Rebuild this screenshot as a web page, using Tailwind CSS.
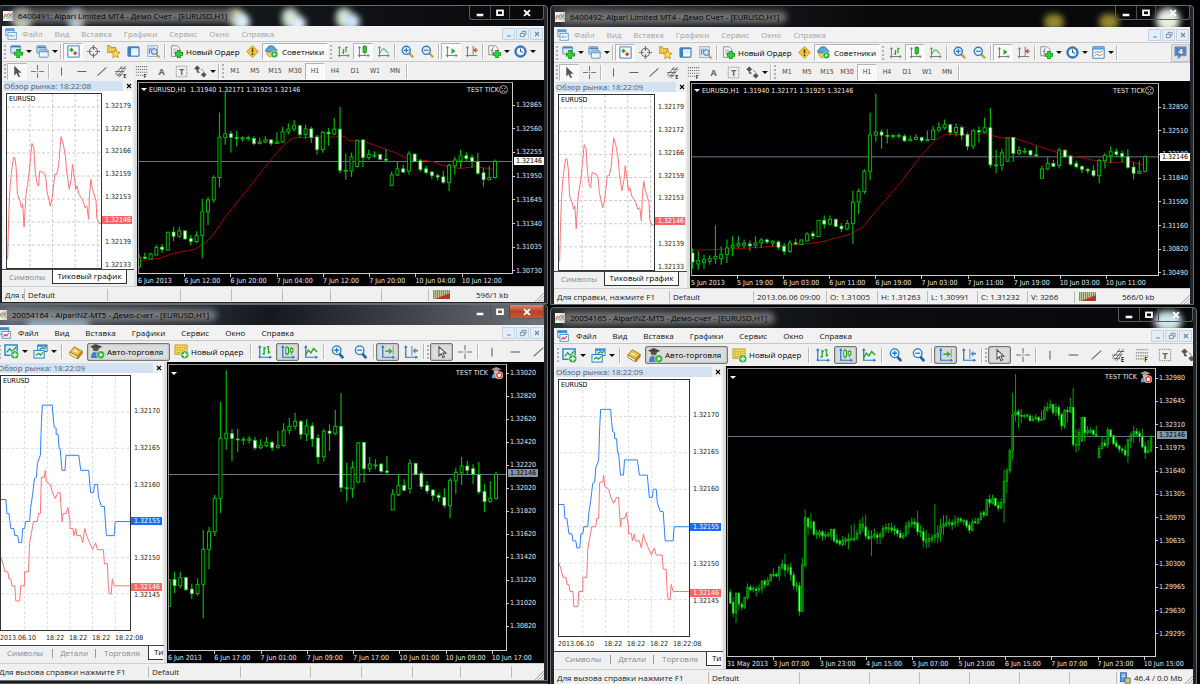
<!DOCTYPE html>
<html lang="ru">
<head>
<meta charset="utf-8">
<title>MetaTrader terminals</title>
<script src="https://cdn.jsdelivr.net/npm/@tailwindcss/browser@4"></script>
</head>
<body class="h-screen overflow-hidden bg-black font-['Open_Sans','Noto_Sans',sans-serif] text-[8px] leading-[10px] text-[#222]">

<svg class="hidden" xmlns="http://www.w3.org/2000/svg">
  <symbol id="logo" viewBox="0 0 16 16"><rect width="16" height="16" fill="#f4f4f0"/><path d="M1 10q2-6 3-5t2 4q2-6 3-5t2 4q2-5 4-3" fill="none" stroke="#e06060" stroke-width="1.6"/><path d="M1 13q2-5 4-4t3 3q2-5 4-4t3 3" fill="none" stroke="#6ab86a" stroke-width="1.4"/></symbol>
  <symbol id="docs" viewBox="0 0 16 16"><rect x="1" y="1" width="11" height="9" fill="#dcecfb" stroke="#4a8fd0"/><rect x="1" y="1" width="11" height="3" fill="#5d9fdd"/><rect x="4" y="6" width="11" height="9" fill="#f4faff" stroke="#4a8fd0"/><path d="M6 12l2-3 2 3 3-3" fill="none" stroke="#5d9fdd" stroke-width="1.3"/></symbol>
  <symbol id="docs5" viewBox="0 0 16 16"><rect x="1" y="1" width="12" height="9" fill="#dcecfb" stroke="#2679c9"/><rect x="1" y="1" width="12" height="3" fill="#3a8ada"/><rect x="4" y="6" width="11" height="9" fill="#fff" stroke="#2679c9"/><path d="M6 13l2-3 2 2 3-4" fill="none" stroke="#e33" stroke-width="1.5"/></symbol>
  <symbol id="newchart" viewBox="0 0 16 16"><rect x="1" y="1" width="12" height="9" rx="1" fill="#d8e8f6" stroke="#4781b8"/><path d="M1 2h12" stroke="#4781b8" stroke-width="2"/><path d="M10 5v11M5 10.500h11" stroke="#0a9a12" stroke-width="4.600"/><path d="M10 6v9M6 10.500h9" stroke="#2fd03a" stroke-width="3"/></symbol>
  <symbol id="profiles" viewBox="0 0 16 16"><rect x="1" y="1" width="11" height="9" rx="1" fill="#cfe2f4" stroke="#4781b8"/><path d="M2 3h10" stroke="#4781b8" stroke-width="2"/><rect x="4" y="6" width="11" height="9" rx="1" fill="#eef6fd" stroke="#4781b8"/><path d="M5 8h10" stroke="#6fa3d6" stroke-width="2"/></symbol>
  <symbol id="market" viewBox="0 0 16 16"><rect x="1" y="1" width="14" height="14" rx="1" fill="#fff" stroke="#5b9bd5" stroke-width="1.600"/><path d="M5.500 3l3 3-3 3-3-3z" fill="#28b030"/><path d="M10 7l3 3-3 3-3-3z" fill="#e05040"/></symbol>
  <symbol id="target" viewBox="0 0 16 16"><circle cx="8" cy="8" r="5" fill="none" stroke="#777" stroke-width="1.500"/><path d="M8 0v6M8 10v6M0 8h6M10 8h6" stroke="#777" stroke-width="1.500"/></symbol>
  <symbol id="star" viewBox="0 0 16 16"><path d="M0 1h4l1 2h6v6H0z" fill="#efc64a" stroke="#b88a1c"/><path d="M10.500 5l1.600 3.600 3.900.4-2.900 2.600.8 4-3.400-2-3.400 2 .8-4L5 9l3.900-.4z" fill="#ffdc50" stroke="#b88a1c"/></symbol>
  <symbol id="terminal" viewBox="0 0 16 16"><rect x="1" y="2" width="14" height="12" rx="1" fill="#3d7fc4" stroke="#4f8ac8"/><rect x="5" y="4" width="9" height="9" fill="#f6fbff"/><path d="M6 6h7M6 8.500h7" stroke="#cfe0f0"/></symbol>
  <symbol id="tester" viewBox="0 0 16 16"><rect x="1" y="1" width="12" height="13" fill="#e6f0f9" stroke="#7ba7d0"/><path d="M3 4v7M5 3v5M8 3v3" stroke="#5a87b5" stroke-width="1.200"/><circle cx="9" cy="8" r="3.500" fill="#cfe5f8" stroke="#5a87b5" stroke-width="1.300"/><path d="M11.500 11l4 4.500" stroke="#c9962c" stroke-width="2"/></symbol>
  <symbol id="order" viewBox="0 0 16 16"><path d="M2 1h7l3 3v10H2z" fill="#fff" stroke="#777"/><path d="M4 5h5M4 7.500h5M4 10h3" stroke="#888"/><path d="M11 6v10M6 11h10" stroke="#0a9a12" stroke-width="4.600"/><path d="M11 7v8M7 11h8" stroke="#2fd03a" stroke-width="3"/></symbol>
  <symbol id="warn" viewBox="0 0 16 16"><path d="M8 .8L15.200 8 8 15.200.8 8z" fill="#f0c838" stroke="#b08a2a"/><path d="M8 4v5" stroke="#5a3c00" stroke-width="2"/><circle cx="8" cy="11.300" r="1.100" fill="#5a3c00"/></symbol>
  <symbol id="expert" viewBox="0 0 16 16"><circle cx="7.500" cy="9" r="5.500" fill="#f1cf57" stroke="#b88a1c"/><path d="M0 7c2 2 12 2 15 0C12 4 12 1 7.500 1S3 4 0 7z" fill="#5ba3dd" stroke="#2e73b3"/><circle cx="11.500" cy="11.500" r="4.300" fill="#26b02e" stroke="#fff" stroke-width=".6"/><path d="M10.300 9.300v4.400l3.400-2.200z" fill="#fff"/></symbol>
  <symbol id="bars" viewBox="0 0 16 16"><path d="M3 2v13M1 13h14M1.500 4L3 2l1.500 2M13 11.500l2 1.500-2 1.500" fill="none" stroke="#777" stroke-width="1.200"/><path d="M8 5v6M8 9H6.500M11 2v7M11 3h2" fill="none" stroke="#1ea82a" stroke-width="1.500"/></symbol>
  <symbol id="candles" viewBox="0 0 16 16"><path d="M3 2v13M1 13h14M1.500 4L3 2l1.500 2M13 11.500l2 1.500-2 1.500" fill="none" stroke="#777" stroke-width="1.200"/><path d="M9.500 0v12" stroke="#128a1c"/><rect x="7.500" y="2" width="4" height="7" fill="#35c53f" stroke="#128a1c"/></symbol>
  <symbol id="line" viewBox="0 0 16 16"><path d="M3 2v13M1 13h14M1.500 4L3 2l1.500 2M13 11.500l2 1.500-2 1.500" fill="none" stroke="#777" stroke-width="1.200"/><path d="M3 11q4-9 7-5t4 3" fill="none" stroke="#5ab862" stroke-width="1.300"/></symbol>
  <symbol id="zin" viewBox="0 0 16 16"><path d="M10 10l5 5" stroke="#d29d2f" stroke-width="2.800"/><circle cx="6.500" cy="6.500" r="5" fill="#e4f2fd" stroke="#2d7dc8" stroke-width="1.700"/><path d="M6.500 3.500v6M3.500 6.500h6" stroke="#2d7dc8" stroke-width="1.500"/></symbol>
  <symbol id="zout" viewBox="0 0 16 16"><path d="M10 10l5 5" stroke="#d29d2f" stroke-width="2.800"/><circle cx="6.500" cy="6.500" r="5" fill="#e4f2fd" stroke="#2d7dc8" stroke-width="1.700"/><path d="M3.500 6.500h6" stroke="#2d7dc8" stroke-width="1.500"/></symbol>
  <symbol id="scroll" viewBox="0 0 16 16"><path d="M3 2v13M1 13h14M1.500 4L3 2l1.500 2M13 11.500l2 1.500-2 1.500" fill="none" stroke="#777" stroke-width="1.200"/><path d="M8 4v7l5-3.500z" fill="#26b02e"/></symbol>
  <symbol id="shift" viewBox="0 0 16 16"><path d="M3 2v13M1 13h14M1.500 4L3 2l1.500 2M10 1v11" fill="none" stroke="#777" stroke-width="1.200"/><path d="M16 6.500h-4M14 4l-3 2.500L14 9" fill="none" stroke="#c8452b" stroke-width="1.400"/></symbol>
  <symbol id="indic" viewBox="0 0 16 16"><path d="M1 1h8l3 3v8H1z" fill="#fff" stroke="#777"/><path d="M7 3q-2 0-2 3v5M3.500 6.500h3.500" fill="none" stroke="#666"/><path d="M11 6v10M6 11h10" stroke="#0a9a12" stroke-width="4.400"/><path d="M11 7v8M7 11h8" stroke="#2fd03a" stroke-width="2.800"/></symbol>
  <symbol id="clock" viewBox="0 0 16 16"><circle cx="8" cy="8" r="7" fill="#2f7fd4" stroke="#1c58a0"/><circle cx="8" cy="8" r="4.700" fill="#eef6ff"/><path d="M8 4.500V8l3 1" fill="none" stroke="#333" stroke-width="1.100"/></symbol>
  <symbol id="tmpl" viewBox="0 0 16 16"><rect x="1" y="1" width="14" height="14" rx="1" fill="#fff" stroke="#4781b8" stroke-width="1.300"/><path d="M1 3h14" stroke="#5d9fdd" stroke-width="3"/><path d="M3 8l3-1 3 1 4-2" fill="none" stroke="#c44"/><path d="M3 12l3-2 3 2 4-2" fill="none" stroke="#2a9a3a"/></symbol>
  <symbol id="chat" viewBox="0 0 16 16"><path d="M1 1h14v11H9l-4 4v-4H1z" fill="#5b7fb5" stroke="#7f9cc8"/><text x="8" y="10" font-size="9" font-weight="bold" text-anchor="middle" fill="#fff">4</text></symbol>
  <symbol id="cursor" viewBox="0 0 16 16"><path d="M4 1v12l3-3 2 5 2-1-2-4.500h4z" fill="#555"/></symbol>
  <symbol id="cursor5" viewBox="0 0 16 16"><path d="M4.500 2v10.500l2.600-2.500 1.900 4.500 2-1-2-4.200h3.600z" fill="#f4f4f4" stroke="#555" stroke-width="1.200"/></symbol>
  <symbol id="cross" viewBox="0 0 16 16"><path d="M8 0v6M8 10v6M0 8h6M10 8h6" stroke="#777" stroke-width="1.300"/><circle cx="8" cy="8" r=".8" fill="#777"/></symbol>
  <symbol id="vl" viewBox="0 0 16 16"><path d="M8 3v10" stroke="#666" stroke-width="1.300"/></symbol>
  <symbol id="hl" viewBox="0 0 16 16"><path d="M3 8h11" stroke="#666" stroke-width="1.300"/></symbol>
  <symbol id="tl" viewBox="0 0 16 16"><path d="M3 13L14 3" stroke="#666" stroke-width="1.300"/></symbol>
  <symbol id="chan" viewBox="0 0 16 16"><path d="M0 12L9 1M3 14L13 1M0 8h11M5 15l7-9M2 12h7M6 4h8" stroke="#666" stroke-width="1.100"/><text x="10" y="16" font-size="7" font-weight="bold" fill="#333">E</text></symbol>
  <symbol id="fib" viewBox="0 0 16 16"><path d="M1 2h14M1 5.500h14M1 9h14M1 12.500h9" stroke="#777" stroke-width="1.300" stroke-dasharray="1.500 1"/><text x="10.500" y="16" font-size="7" font-weight="bold" fill="#333">F</text></symbol>
  <symbol id="txt" viewBox="0 0 16 16"><text x="8" y="12.500" font-size="11" font-weight="bold" text-anchor="middle" fill="#666">A</text></symbol>
  <symbol id="tbox" viewBox="0 0 16 16"><rect x="1.500" y="1.500" width="13" height="13" fill="none" stroke="#777" stroke-dasharray="1.500 1"/><text x="8" y="12" font-size="11" font-weight="bold" text-anchor="middle" fill="#666">T</text></symbol>
  <symbol id="arrows" viewBox="0 0 16 16"><path d="M4 1l3 3-3 3-3-3zM4 6v3h3M9 5l3 3M12 9l3 3-3 3-3-3z" fill="#555" stroke="#555"/></symbol>
  <symbol id="new5" viewBox="0 0 16 16"><rect x="1" y="1" width="13" height="11" fill="#dff0ff" stroke="#2679c9" stroke-width="1.400"/><path d="M3 9l3-4 3 3 4-5" fill="none" stroke="#2a9a3a" stroke-width="1.400"/><circle cx="11.500" cy="11.500" r="4.300" fill="#35b53c" stroke="#fff" stroke-width=".6"/><path d="M11.500 9v5M9 11.500h5" stroke="#fff" stroke-width="1.500"/></symbol>
  <symbol id="prof5" viewBox="0 0 16 16"><rect x="5" y="1" width="10" height="7" fill="#dff0ff" stroke="#2679c9"/><path d="M5 2h10M1 8h11" stroke="#3a8ada" stroke-width="2"/><rect x="1" y="7" width="11" height="8" fill="#e8f5ff" stroke="#2679c9"/><path d="M3 12l3-2 2 2 3-3M7 6l3-2 2 1 2-2" fill="none" stroke="#2a9a3a" stroke-width="1.300"/></symbol>
  <symbol id="book" viewBox="0 0 16 16"><path d="M1 8l5-6 9 5-5 6z" fill="#f0c445" stroke="#a5761a"/><path d="M1 8v3l9 5v-3z" fill="#fff6dc" stroke="#a5761a"/><path d="M10 13v3l5-6V7z" fill="#c48f25" stroke="#a5761a"/><path d="M5 6l4 2" stroke="#fff" stroke-width="1.500"/></symbol>
  <symbol id="auto" viewBox="0 0 16 16"><path d="M1 15q0-7 5-7t5 7z" fill="#3d7fc4"/><circle cx="6.500" cy="6" r="3" fill="#e6b98a"/><path d="M0 3l6-3 7 3-6 3z" fill="#444"/><path d="M3 4v3q4 1 6 0V4z" fill="#555"/><circle cx="11.500" cy="11.500" r="4.400" fill="#35b53c" stroke="#fff" stroke-width=".6"/><path d="M10.300 9.200v4.600l3.600-2.300z" fill="#fff"/></symbol>
  <symbol id="autostop" viewBox="0 0 16 16"><path d="M1 15q0-7 5-7t5 7z" fill="#5b9be0"/><circle cx="6.500" cy="6" r="3" fill="#e6b98a"/><path d="M0 3l7-3 7 3-7 3z" fill="#999"/><circle cx="11" cy="11" r="5" fill="#e04a30" stroke="#fff" stroke-width=".8"/><rect x="9" y="9" width="4" height="4" fill="#fff"/></symbol>
  <symbol id="order5" viewBox="0 0 16 16"><path d="M1 1h13v10H1z" fill="#f7d95a" stroke="#c09a28"/><path d="M3 4h9M3 6.500h9M3 9h5" stroke="#b58a1e" stroke-dasharray="1.500 1"/><circle cx="11.500" cy="11.500" r="4.300" fill="#35b53c" stroke="#fff" stroke-width=".6"/><path d="M11.500 9v5M9 11.500h5" stroke="#fff" stroke-width="1.500"/></symbol>
  <symbol id="bars5" viewBox="0 0 16 16"><path d="M2 1v13M1 14h14" stroke="#2679c9" stroke-width="1.400"/><path d="M0 3l2-3 2 3zM13 12l3 2-3 2zM1 13h2v2H1z" fill="#2679c9"/><path d="M7 2v9M7 10H5M7 4h2M12 1v9M12 2h-2M12 8h2" stroke="#2aa82a" stroke-width="1.600"/></symbol>
  <symbol id="candles5" viewBox="0 0 16 16"><path d="M2 1v13M1 14h14" stroke="#2679c9" stroke-width="1.400"/><path d="M0 3l2-3 2 3zM13 12l3 2-3 2z" fill="#2679c9"/><path d="M7 1v11M12 2v9" stroke="#2aa82a"/><rect x="5.500" y="3" width="3" height="7" fill="#e8ffe8" stroke="#2aa82a" stroke-width="1.300"/><rect x="10.500" y="4" width="3" height="4" fill="#e8ffe8" stroke="#2aa82a" stroke-width="1.300"/></symbol>
  <symbol id="line5" viewBox="0 0 16 16"><path d="M2 1v13M1 14h14" stroke="#2679c9" stroke-width="1.400"/><path d="M0 3l2-3 2 3zM13 12l3 2-3 2z" fill="#2679c9"/><path d="M2 11l3-5 3 3 3-5 4 4" fill="none" stroke="#2aa82a" stroke-width="1.600"/></symbol>
  <symbol id="zin5" viewBox="0 0 16 16"><path d="M9.500 10l4.500 5" stroke="#1e62b4" stroke-width="3"/><circle cx="6.500" cy="6" r="4.900" fill="#f1f8ff" stroke="#2679c9" stroke-width="1.500"/><path d="M6.500 3.200v5.600M3.700 6h5.600" stroke="#2679c9" stroke-width="1.500"/></symbol>
  <symbol id="zout5" viewBox="0 0 16 16"><path d="M9.500 10l4.500 5" stroke="#1e62b4" stroke-width="3"/><circle cx="6.500" cy="6" r="4.900" fill="#f1f8ff" stroke="#2679c9" stroke-width="1.500"/><path d="M3.700 6h5.600" stroke="#2679c9" stroke-width="1.500"/></symbol>
  <symbol id="scroll5" viewBox="0 0 16 16"><path d="M2 1v13M1 14h14" stroke="#2679c9" stroke-width="1.400"/><path d="M0 3l2-3 2 3zM13 12l3 2-3 2z" fill="#2679c9"/><path d="M14 1v10" stroke="#888"/><path d="M5 6h4V3.500l4.500 3.500L9 10.500V8H5z" fill="#3ab53a"/></symbol>
  <symbol id="shift5" viewBox="0 0 16 16"><path d="M2 1v13M1 14h14" stroke="#2679c9" stroke-width="1.400"/><path d="M0 3l2-3 2 3zM13 12l3 2-3 2z" fill="#2679c9"/><path d="M9 1v11" stroke="#888" stroke-width="1.300"/><path d="M16 5.500h-3V3l-3 3.500 3 3.500V7.500h3z" fill="#3a8ada"/></symbol>
  <symbol id="sad" viewBox="0 0 16 16"><circle cx="8" cy="8" r="7" fill="none" stroke="#eee" stroke-width="1.200"/><path d="M4 5l3 1.500M12 5L9 6.500M4.500 12q3.500-4 7 0" fill="none" stroke="#eee" stroke-width="1.300"/></symbol>
  <symbol id="grip" viewBox="0 0 12 12"><path d="M1 12L12 1M5 12l7-7M9 12l3-3" stroke="#9a9a9a" stroke-width="1.200"/></symbol>
  <symbol id="traffic" viewBox="0 0 17 9"><path d="M0 4.500h17" stroke="#7f9a3a" stroke-width="9" stroke-dasharray="1.500 .5"/><path d="M2 9L17 3v6z" fill="#b3392b"/></symbol>
  <symbol id="server" viewBox="0 0 16 16"><rect x="2" y="1" width="8" height="12" fill="#5b9be0" stroke="#2c65a3"/><path d="M4 4h4M4 6h4" stroke="#fff"/><path d="M8 8h7v7H8z" fill="#e7c34a" stroke="#2c65a3"/></symbol>
  <symbol id="min" viewBox="0 0 12 12"><path d="M2 8.500h8" stroke="currentColor" stroke-width="3"/></symbol>
  <symbol id="max" viewBox="0 0 12 12"><rect x="2.500" y="3" width="7" height="5.500" fill="none" stroke="currentColor" stroke-width="2.200"/></symbol>
  <symbol id="x" viewBox="0 0 12 12"><path d="M2.500 2.500l7 7M9.500 2.500l-7 7" stroke="currentColor" stroke-width="2.400"/></symbol>
  <symbol id="mmin" viewBox="0 0 12 12"><path d="M3 9h6" stroke="currentColor" stroke-width="1.500"/></symbol>
  <symbol id="mres" viewBox="0 0 12 12"><path d="M4.500 4V2h6v5h-2M2 5h6v5H2z" fill="none" stroke="currentColor" stroke-width="1.400"/></symbol>
  <symbol id="mx" viewBox="0 0 12 12"><path d="M3 3l6 6M9 3l-6 6" stroke="currentColor" stroke-width="1.700"/></symbol>
</svg>

<main class="flex h-full w-full items-stretch pt-[5px]">
  <div class="flex w-[45.75%] flex-none flex-col pr-px" id="left"></div>
  <div class="flex min-w-0 flex-1 flex-col pl-px" id="right"></div>
</main>

<script>
/* ---------- price bars: [high, low, bodyTop, bodyBottom, bearish] on a chart scale ---------- */
const history = [
[867,912,877,910,1],[892,952,907,940,1],[878,970,880,940,0],[877,930,880,912,1],[905,932,913,922,1],[895,928,893,922,0],[850,898,862,895,0],[855,873,863,870,1],[858,878,865,868,0],[858,890,868,872,1],[853,878,865,870,0],[840,880,845,865,0],[838,865,843,855,1],[832,858,842,855,0],[820,845,824,842,0],[805,832,823,827,0],[818,832,824,828,1],[795,843,802,828,0],[778,808,792,804,0],[762,830,794,810,1],[792,820,803,810,0],[788,842,802,825,1],[815,870,825,858,1],[845,875,855,860,0],[847,948,858,935,1],[773,935,795,935,0],[628,800,652,798,0],[650,705,655,680,1],[638,690,665,682,0],[662,708,665,702,1],[690,717,698,703,0],[688,715,695,705,0],[690,722,695,708,1],[695,718,703,708,0],[695,710,702,708,0],[685,720,688,708,0],[685,728,688,722,1],[702,732,720,728,1],[718,738,722,732,1],[708,738,720,735,0],[712,735,717,724,0],[700,748,717,722,0],[675,722,716,720,0],[670,725,714,719,0],[688,722,700,715,0],[658,705,672,700,0],[650,695,672,682,0],[643,718,680,708,1],[690,720,708,716,1],[690,768,708,714,0],[685,718,703,708,0],[695,732,705,712,1],[695,732,703,710,0],[675,715,685,708,0],[670,698,682,688,0],[668,700,683,688,0],[668,698,683,690,1],[675,705,686,692,1],[683,710,690,700,1],[690,715,700,712,1],[697,718,705,712,0],[665,712,678,705,0],[660,702,670,680,0],[652,682,665,672,0],[655,685,666,672,1],[632,705,668,695,1],[675,710,692,697,0],[682,742,695,722,1],[690,745,718,728,0],[700,742,715,724,0],[702,730,712,720,0],[612,728,705,712,0],[675,730,700,712,0],[655,725,680,700,0],[645,705,672,680,0],[645,680,668,674,0],[655,682,666,672,0],[658,690,668,674,1],[645,682,665,672,0],[650,680,656,665,0],[652,668,656,662,1],[657,675,660,665,0],[658,685,662,678,1],[665,700,675,690,1]
].map(b => b.map((v, i) => i < 4 ? 32980 - (v - 235) * 4.817 : v));
const recent = [
[933,997,948,990,0],[926,956,947,953,1],[929,957,933,956,0],[894,938,904,938,0],[889,928,902,913,1],
[835,918,836,916,0],[812,876,835,854,1],[812,861,830,854,0],[828,870,830,866,1],[848,894,864,878,1],[832,884,851,878,0],[687,952,745,850,0],[678,805,692,745,0],[582,705,592,692,0],[302,637,412,592,0],[208,446,397,413,0],[384,480,397,413,1],[384,454,414,417,1],[408,431,415,418,0],[405,428,414,418,0],[408,447,418,441,1],[415,445,433,440,0],[408,438,424,434,0],[420,450,424,440,1],[390,443,434,440,0],[367,437,388,434,0],[350,400,376,388,0],[335,386,361,376,0],[357,414,361,400,1],[355,420,375,400,0],[365,438,375,414,1],[400,489,411,468,1],[384,482,391,467,0],[370,450,390,397,1],[327,403,376,398,0],[277,573,376,560,1],[485,602,560,563,0],[480,590,500,563,0],[424,547,426,543,0],[423,545,424,503,1],[468,513,489,503,0],[475,505,492,495,0],[487,515,489,511,1],[465,521,510,514,1],[565,627,580,627,0],[520,585,553,581,0],[535,570,553,568,1],[475,578,487,563,0],[487,523,487,521,1],[511,565,517,557,1],[540,578,553,570,1],[565,600,567,584,1],[575,604,583,590,1],[562,620,589,613,1],[531,652,538,614,0],[500,578,514,540,0],[468,552,495,515,0],[479,519,495,508,1],[490,549,503,520,1],[483,580,520,573,1],[549,633,571,602,1],[540,605,592,602,0],[512,598,520,592,0]
].map(b => b.map((v, i) => i < 4 ? 33020 - (v - 219) * 2.8986 : v));
const series = history.concat(recent);

const icon = (id, c = 'size-[13px]') => `<svg class="${c} flex-none"><use href="#${id}"/></svg>`;
const arrow = '<i class="ml-[3px] border-x-[3px] border-t-[3px] border-x-transparent border-t-[#111]"></i>';
const sep = '<i class="mx-px h-[15px] w-[2px] flex-none border-l border-[#b9b9b9] border-r border-r-white"></i>';
const grip = '<i class="mx-px h-[14px] w-[2px] flex-none border-l-2 border-dotted border-[#b0b0b0]"></i>';
const btn = (id, on) => `<button aria-label="${id}" class="flex h-[17px] w-5 flex-none items-center justify-center ${on ? 'border border-[#b5b5b5] border-r-white border-b-white bg-[#f9f9f9]' : ''}">${icon(id)}</button>`;
const drop = id => `<button aria-label="${id}" class="flex h-[17px] w-[26px] flex-none items-center pl-[3px]">${icon(id)}${arrow}</button>`;
const btn5 = (id, on) => `<button aria-label="${id}" class="flex h-[18px] w-[23px] flex-none items-center justify-center ${on ? 'rounded-[2px] border border-[#777] bg-[#dcdcdc] shadow-[inset_0_0_2px_#888]' : ''}">${icon(id, 'size-[14px]')}</button>`;
const drop5 = id => `<button aria-label="${id}" class="flex h-[18px] w-[29px] flex-none items-center pl-[2px]">${icon(id, 'size-[15px]')}${arrow}</button>`;

function titleBar(w) {
  return `<header class="relative flex ${w.titleH} flex-none items-center gap-[5px] overflow-hidden ${w.titleBg} pl-px">
    ${w.blobs.map(b => `<i class="absolute ${b} rounded-full blur-[3px]"></i>`).join('')}
    ${icon('logo', 'relative size-[10px]')}
    <h1 class="relative whitespace-nowrap text-[8px] font-medium leading-3 text-black"><i class="absolute -inset-x-2 inset-y-0 rounded-full bg-[#8a8a8a]/80 blur-[3px]"></i><span class="relative">${w.title}</span></h1>
    <div class="relative ml-auto flex h-[14px] self-start overflow-hidden rounded-b-[3px] border border-t-0 border-[#5a5d61] text-white">
      <button aria-label="Minimize" class="flex w-[21px] items-center justify-center border-r border-[#4a4d51]">${icon('min', 'size-[10px]')}</button>
      <button aria-label="Maximize" class="flex w-[19px] items-center justify-center border-r border-[#4a4d51]">${icon('max', 'size-[10px]')}</button>
      <button aria-label="Close" class="flex w-[33px] items-center justify-center ${w.red ? 'bg-linear-to-b from-[#d98a78] via-[#b8402a] to-[#c9563a]' : ''}">${icon('x', 'size-[10px]')}</button>
    </div></header>`;
}
function menuBar(w) {
  return `<nav class="flex h-[15px] flex-none items-center bg-[#f2f2f2]">
    <span class="ml-[3px] mr-[6px] flex">${icon(w.mt5 ? 'docs5' : 'docs', 'size-[12px]')}</span>
    <div class="flex ${w.mt5 ? 'ml-px gap-[16px] text-[#111]' : '-ml-px gap-[12px] text-[#a3a3a3]'}">
    ${['Файл', 'Вид', 'Вставка', 'Графики', 'Сервис', 'Окно', 'Справка'].map(m => `<button>${m}</button>`).join('')}</div>
    <div class="ml-auto mr-px flex gap-px text-[#71879c]">
    ${['mmin', 'mres', 'mx'].map(m => `<button aria-label="${m}" class="flex h-[12px] w-[13px] items-center justify-center border border-[#c3d4e4] bg-[#e4eef8]">${icon(m, 'size-[8px]')}</button>`).join('')}</div></nav>`;
}
function tools4(w) {
  return `<div class="flex h-5 flex-none items-center border-t border-[#c8c8c8] bg-[#f0f0f0] pl-px">${grip}${drop('newchart')}${drop('profiles')}${sep}
    ${btn('market', 1)}${btn('target')}${btn('star')}${btn('terminal')}${btn('tester')}${sep}
    <button class="flex h-[17px] w-[75px] flex-none items-center gap-[3px] whitespace-nowrap pl-[3px] text-black">${icon('order')}Новый Ордер</button>
    ${btn('warn')}
    <button class="mr-px flex h-[17px] w-[66px] flex-none items-center gap-[4px] whitespace-nowrap border border-[#b5b5b5] border-r-white border-b-white bg-[#f9f9f9] pl-[2px] text-black">${icon('expert')}Советники</button>
    ${grip}${btn('bars')}${btn('candles', 1)}${btn('line')}${sep}${btn('zin')}${btn('zout')}${sep}${btn('scroll', 1)}${btn('shift')}${sep}${drop('indic')}${drop('clock')}
    ${w.wide ? drop('tmpl') + sep + `<button aria-label="Messages" class="ml-auto flex h-[18px] w-[19px] items-center justify-center border border-[#c5c5c5] bg-[#e2e2e2]">${icon('chat')}</button>` : ''}</div>
  <div class="flex h-[19px] flex-none items-center border-t border-[#c8c8c8] bg-[#f0f0f0] pl-px">${grip}
    ${btn('cursor', 1)}${btn('cross')}${sep}${btn('vl')}${btn('hl')}${btn('tl')}${btn('chan')}${btn('fib')}${btn('txt')}${btn('tbox')}
    <button aria-label="arrows" class="flex h-[17px] w-[26px] flex-none items-center pl-[3px]">${icon('arrows')}${arrow}</button>${sep}${grip}
    ${['M1', 'M5', 'M15', 'M30', 'H1', 'H4', 'D1', 'W1', 'MN'].map(t => `<button class="flex h-[17px] w-5 flex-none items-center justify-center font-['DejaVu_Sans_Condensed','DejaVu_Sans',sans-serif] text-[7px] text-[#444] ${t === 'H1' ? 'border border-[#b5b5b5] border-r-white border-b-white bg-[#f9f9f9]' : ''}">${t}</button>`).join('')}${sep}</div>`;
}
function tools5(w) {
  return `<div class="flex ${w.toolH} flex-none items-center overflow-hidden border-t border-[#c8c8c8] bg-[#f0f0f0] pl-[2px]">${grip}${drop5('new5')}${drop5('prof5')}${sep}${btn5('book')}
    <button class="flex h-[18px] w-[83px] flex-none items-center gap-[2px] whitespace-nowrap rounded-[2px] border border-[#777] bg-[#dcdcdc] pl-[2px] text-black shadow-[inset_0_0_2px_#888]">${icon('auto', 'size-[15px]')}Авто-торговля</button>
    <button class="flex h-[18px] w-[79px] flex-none items-center gap-[2px] whitespace-nowrap pl-[4px] text-black">${icon('order5', 'size-[15px]')}Новый ордер</button>
    ${sep}${btn5('bars5')}${btn5('candles5', 1)}${btn5('line5')}${sep}${btn5('zin5')}${btn5('zout5')}${sep}${btn5('scroll5', 1)}${btn5('shift5')}${sep}${grip}
    ${btn5('cursor5', 1)}${btn5('cross')}${sep}${btn5('vl')}${btn5('hl')}${btn5('tl')}${w.wide ? btn5('chan') + btn5('fib') + btn5('tbox') + btn5('arrows') : ''}</div>`;
}

const tick4 = '20,325 22,240 25,150 28,100 32,60 38,20 42,20 46,50 50,130 58,150 62,170 66,160 70,228 76,130 84,80 90,20 94,-23 100,-10 104,60 110,100 114,105 118,60 130,65 136,75 140,120 150,165 156,140 164,70 170,70 176,40 180,-10 183,-43 190,-20 197,20 200,60 208,115 214,85 218,40 224,80 228,115 232,105 238,130 244,140 250,150 256,170 262,165 267,205 270,130 274,85 278,110 290,150 292,200 298,217 305,217';
const ask5 = '0,499 5,499 6,513 8,513 10,528 13,528 14,535 17,535 18,542 21,542 22,528 24,528 25,521 29,521 30,508 32,495 34,478 36,477 37,463 40,455 41,423 42,405 52,405 53,417 54,427 56,428 56,434 58,434 59,448 60,448 62,470 65,470 66,455 79,455 81,470 89,470 91,492 94,492 95,484 98,484 99,497 102,506 105,506 107,535 115,535 116,521 131,521';
const bid5 = '0,557 2,563 4,571 7,571 8,578 10,578 11,585 14,585 15,600 19,600 20,585 24,585 24,571 28,571 29,543 33,521 37,521 38,513 40,513 41,477 44,477 45,470 46,481 50,484 52,491 55,498 58,492 60,492 62,521 63,513 66,513 68,507 70,521 70,528 73,528 74,535 76,528 77,535 81,535 83,542 85,528 87,535 90,542 93,549 96,542 98,549 104,549 105,563 108,563 109,585 110,593 112,593 113,578 115,585 131,585';
const tiny = "font-['DejaVu_Sans_Condensed','DejaVu_Sans',sans-serif] text-[7px] leading-[8px]";

function panel(w) {
  const grid = w.mt5
    ? [24, 47, 70, 93, 116].map(x => `M${x} 376V629`).join('') + [412, 448, 484, 521, 557, 593].map(y => `M0 ${y}H131`).join('')
    : [88, 157, 226, 295].map(x => `M${x}-171V351`).join('') + [-132, -63, 6, 75, 144, 213, 282].map(y => `M18 ${y}H305`).join('');
  const vb = w.mt5 ? '0 376 131 253' : '18 -171 287 522';
  const poly = (p, c) => `<polyline points="${p}" fill="none" stroke="${c}" stroke-width="1" vector-effect="non-scaling-stroke"/>`;
  return `<aside class="flex ${w.panelW} flex-none flex-col overflow-hidden bg-[#f0f0f0] pt-px">
    <h2 class="flex h-[10px] flex-none items-center text-[8px] text-[#4b6179]"><span class="ml-[2px] flex-1 whitespace-nowrap bg-[#d3e1f0] leading-[10px]">${w.clock}</span><button aria-label="Close panel" class="flex w-[11px] justify-center text-black">${icon('mx', 'size-[8px]')}</button></h2>
    <div class="mx-[2px] flex min-h-0 flex-1 bg-white pl-[2px] pt-[2px] ${tiny}">
      <div class="flex min-w-0 flex-1 flex-col">
        <div class="relative min-h-0 flex-1 border border-[#333]">
          <span class="absolute left-[2px] top-px text-black">EURUSD</span>
          <svg class="h-full w-full" viewBox="${vb}" preserveAspectRatio="none"><path d="${grid}" stroke="${w.mt5 ? '#ddd' : '#ccc'}" stroke-dasharray="3 2" vector-effect="non-scaling-stroke"/>${w.mt5 ? poly(ask5, '#2f7fff') + poly(bid5, '#ff7373') : poly(tick4, '#ff7373')}</svg>
        </div>
        ${w.mt5 ? `<div class="flex h-[14px] flex-none items-center whitespace-nowrap text-[#222]"><span class="w-[46px]">2013.06.10</span><span class="w-[23px]">18:22</span><span class="w-[23px]">18:22</span><span class="w-[23px]">18:22</span><span class="w-0">18:22:08</span></div>` : ''}
      </div>
      <div class="relative flex ${w.mt5 ? 'w-[31px] pt-[32px] pb-[46px]' : 'w-[30px] pt-[9px]'} flex-none flex-col justify-between text-[#222]">
        ${w.ticks.map((t, i) => `<span class="${i === w.ask ? (w.mt5 ? 'bg-[#1a6cff] text-white' : 'bg-[#ff6464] text-white') : ''} pl-[3px]">${t}</span>`).join('')}
        ${w.mt5 ? '<span class="absolute inset-x-0 bottom-[54px] bg-[#ff6464] pl-[3px] text-white">1.32146</span>' : ''}
      </div>
    </div>
    <div role="tablist" class="flex ${w.mt5 ? 'h-[18px]' : 'h-[17px]'} flex-none items-start overflow-hidden whitespace-nowrap border-t border-[#444] text-[#8a8a8a]">
      ${w.mt5
        ? `<button class="h-[14px] pl-[11px] pr-[9px]">Символы</button><i class="mt-[3px] h-[9px] border-l border-[#999]"></i><button class="h-[14px] px-[7px]">Детали</button><i class="mt-[3px] h-[9px] border-l border-[#999]"></i><button class="h-[14px] px-[8px]">Торговля</button><button aria-label="Тиковый график" class="-mt-px mr-[3px] h-[15px] flex-1 border-b border-l border-[#333] bg-white pl-[5px] text-left text-black">Ти</button>`
        : `<button class="h-[14px] w-[50px] flex-none">Символы</button><button class="-mt-px h-[15px] w-[75px] flex-none border border-t-0 border-[#333] bg-white text-black">Тиковый график</button>`}
    </div></aside>`;
}

/* scale: price at viewBox y, price units per pixel */
function candles(w) {
  const y = p => (w.y0 + (w.p0 - p) / w.per);
  let wick = '', up = '', down = '';
  series.slice(-w.count).forEach((b, i, a) => {
    const x = w.lastX - (a.length - 1 - i) * w.pitch, [h, l, t, bt] = b.slice(0, 4).map(y);
    const hw = w.thin ? 0.8 : 1.5, height = Math.max(bt - t, 1);
    if (b[4]) { wick += `M${x} ${h}V${l}`; down += `<rect x="${x - hw}" y="${t}" width="${hw * 2}" height="${height}"/>`; }
    else { wick += `M${x} ${h}V${t}M${x} ${bt}V${l}`; up += `<rect x="${x - hw}" y="${t}" width="${hw * 2}" height="${height}"/>`; }
  });
  return `<path d="M${w.x0} ${y(32146)}h500" stroke="#65758a"/>${w.ma ? `<polyline points="${w.ma}" fill="none" stroke="#a80000"/>` : ''}
    <path d="${wick}" stroke="#00b800" fill="none" stroke-width="${w.thin ? 0.9 : 1.2}"/>
    <g stroke="#00b800" fill="${w.thin ? '#006000' : '#000'}" stroke-width="${w.thin ? 0.8 : 1}">${up}</g>
    <g fill="${w.thin ? '#80ff80' : '#fff'}" stroke="#00d000" stroke-width=".7">${down}</g>`;
}
function chart(w) {
  const share = 46 / w.w * 100;
  return `<section class="ml-[3px] flex min-w-0 flex-1 bg-black pl-px pt-[2px] ${tiny} text-[#e8e8e8]">
    <div class="flex min-w-0 flex-1 flex-col">
      <div class="relative min-h-0 flex-1 border border-[#999] border-r-[#ccc] border-b-[#ccc]">
        <svg class="absolute inset-0 h-full w-full" viewBox="${w.x0} ${w.top} ${w.w} ${w.h}" preserveAspectRatio="none">${candles(w)}</svg>
        <div class="relative flex items-center px-[2px] pt-[2px]"><i class="border-x-[3px] border-t-[3px] border-x-transparent border-t-white"></i>
          ${w.mt5 ? '' : '<span class="ml-[2px] whitespace-pre">EURUSD,H1  1.31940 1.32171 1.31925 1.32146</span>'}
          <span class="ml-auto ${w.mt5 ? 'mr-px' : ''}">TEST TICK</span>${icon(w.mt5 ? 'autostop' : 'sad', w.mt5 ? 'ml-[2px] mr-px size-[12px]' : 'mr-[2px] size-[9px]')}</div>
      </div>
      <div class="flex h-[12px] flex-none">${w.times.map((t, i) => `<span class="relative flex-none whitespace-nowrap pt-[3px]" style="width:${share}%"><i class="absolute left-0 top-0 h-[3px] ${i ? 'border-l border-[#ccc]' : ''}"></i>${t}</span>`).join('')}</div>
    </div>
    <div class="relative flex ${w.mt5 ? 'w-[37px]' : 'w-[31px]'} flex-none flex-col justify-between ${w.axisPad}">
      ${w.prices.map(p => `<span class="flex items-center gap-px"><i class="w-[2px] border-t border-[#ccc]"></i>${p}</span>`).join('')}
      <b class="absolute left-px right-0 ${w.nowTop} pl-[2px] font-normal text-black ${w.mt5 ? 'mr-[6px] bg-[#8295a6]' : 'bg-white'}">1.32146</b>
    </div></section>`;
}
function statusBar(w) {
  return `<footer class="flex ${w.statusH} flex-none items-center overflow-hidden border-t border-[#cfcfcf] bg-[#f0f0f0] text-[#222]">
    ${w.status.map(([c, t]) => `<span class="${c} h-[12px] flex-none overflow-hidden whitespace-nowrap border-r border-[#bbb] pl-[3px] leading-[12px]">${t}</span>`).join('')}
    ${w.tail}<span class="ml-auto self-end">${icon('grip', 'size-[10px]')}</span></footer>`;
}
function win(w) {
  return `<article class="${w.frame} flex min-w-0 flex-col rounded-t-[4px] border border-[#686c71] bg-[#22262b] px-[3px]">
    ${titleBar(w)}${menuBar(w)}${w.mt5 ? tools5(w) : tools4(w)}
    <div class="flex ${w.bodyH} min-h-0 bg-[#dcdcdc]">${panel(w)}${chart(w)}</div>${statusBar(w)}</article>`;
}

const t4 = b => ['1.32179', b ? '1.32172' : '1.32173', '1.32166', '1.32159', '1.32153', '1.32146', '1.32139', '1.32133'];
const t5 = ['1.32170', '1.32165', '1.32160', '1.32155', '1.32150', '1.32145'];
const maA = '139,261 160,258 175,253 195,249 205,243 213,235 225,217 250,186 270,160 284,144 294,137 345,136 348,140 365,141 395,152 408,158 425,160 433,161 443,165 460,168 475,166 495,169';
const maB = '692,250 730,249 760,247 790,245 820,242 850,234 862,227 875,211 900,182 920,156 934,140 944,134 985,133 1000,137 1016,138 1060,153 1075,156 1090,159 1110,162 1130,161 1145,165';

document.getElementById('left').innerHTML = win({
  title: '6400491: Alpari Limited MT4 - Демо Счет - [EURUSD,H1]', titleH: 'h-5', titleBg: 'bg-linear-to-r from-[#202428] to-[#08090b]',
  blobs: ['left-[10px] top-[3px] h-5 w-5 bg-[#d8e2c8]', 'left-[66px] top-[3px] h-5 w-4 bg-[#cfe2f2]', 'left-[226px] top-[3px] h-4 w-4 bg-[#d8e6b8]', 'left-[232px] top-[8px] h-4 w-4 bg-[#dff0ff]', 'left-[280px] top-[2px] h-5 w-4 bg-[#cfe6d0]', 'left-[288px] top-[10px] h-4 w-4 bg-[#e6f4ff]', 'left-[334px] top-[2px] h-5 w-4 bg-[#cfe6d0]', 'left-[342px] top-[8px] h-4 w-4 bg-[#d4e6ff]'],
  frame: '-ml-[2px] pb-px', bodyH: 'h-[206px]', panelW: 'w-[132px]', clock: 'Обзор рынка: 18:22:08', ticks: t4(), ask: 5,
  x0: 139, top: 82, w: 373, h: 191, y0: 105, p0: 32865, per: 12.861, count: 63, lastX: 495, pitch: 5.74, ma: maA,
  times: ['6 Jun 2013', '6 Jun 12:00', '6 Jun 20:00', '7 Jun 04:00', '7 Jun 12:00', '7 Jun 20:00', '10 Jun 04:00', '10 Jun 12:00'],
  prices: ['1.32865', '1.32560', '1.32255', '1.31950', '1.31645', '1.31340', '1.31035', '1.30730'], axisPad: 'pt-[19px] pb-[11px]', nowTop: 'top-[37%]',
  statusH: 'h-4', status: [['w-[23px]', 'Для с'], ['w-[83px]', 'Default'], ['w-[73px]', ''], ['w-[51px]', ''], ['w-[51px]', ''], ['w-[48px]', ''], ['w-[51px]', ''], ['w-[47px]', '']],
  tail: `<span class="ml-[4px] mr-[26px] flex">${icon('traffic', 'h-[9px] w-[17px]')}</span>596/1 kb`
}) + win({
  mt5: 1, red: 1, title: '20054164 - AlpariNZ-MT5 - Демо-счет - [EURUSD,H1]', titleH: 'h-5', titleBg: 'bg-linear-to-r from-[#5b6670] via-[#15191e] to-[#6f7479]', blobs: ['left-[30px] top-[12px] h-4 w-16 bg-[#8fa9c0]'],
  frame: '-ml-2 flex-1 min-h-0', toolH: 'h-[22px]', bodyH: 'flex-1', panelW: 'w-[168px]', clock: 'Обзор рынка: 18:22:09', ticks: t5, ask: 3,
  x0: 169, top: 364, w: 337, h: 285, y0: 373, p0: 33020, per: 8.696, count: 58, lastX: 496, pitch: 5.74,
  times: ['6 Jun 2013', '6 Jun 17:00', '7 Jun 01:00', '7 Jun 09:00', '7 Jun 17:00', '10 Jun 01:00', '10 Jun 09:00', '10 Jun 17:00'],
  prices: ['1.33020', '1.32820', '1.32620', '1.32420', '1.32220', '1.32020', '1.31820', '1.31620', '1.31420', '1.31220', '1.31020', '1.30820'], axisPad: 'pt-[5px] pb-[33px]', nowTop: 'top-[35%]',
  statusH: 'h-[17px]', status: [['w-[153px]', 'Для вызова справки нажмите F1'], ['w-[92px]', 'Default'], ['w-[70px]', ''], ['w-[51px]', ''], ['w-[51px]', ''], ['w-[48px]', ''], ['w-[51px]', '']], tail: ''
}) + '<div class="-ml-2 h-[3px] flex-none border-b border-[#555] bg-[#1a1d21]"></div>';

document.getElementById('right').innerHTML = win({
  wide: 1, title: '6400492: Alpari Limited MT4 - Демо Счет - [EURUSD,H1]', titleH: 'h-[21px]', titleBg: 'bg-linear-to-r from-[#303438] via-[#08090b] to-[#08090b]',
  blobs: ['left-[490px] top-[8px] h-4 w-5 bg-[#b9a83a]/80', 'left-[545px] top-[8px] h-4 w-5 bg-[#b9a83a]/80', 'left-[602px] top-[2px] h-6 w-6 bg-[#e6efe0]'],
  frame: 'mr-[6px]', bodyH: 'h-[207px]', panelW: 'w-[133px]', clock: 'Обзор рынка: 18:22:09', ticks: t4(1), ask: 5,
  x0: 691, top: 83, w: 467, h: 192, y0: 107, p0: 32850, per: 14.3, count: 80, lastX: 1145, pitch: 5.74, ma: maB,
  times: ['5 Jun 2013', '5 Jun 19:00', '6 Jun 03:00', '6 Jun 11:00', '6 Jun 19:00', '7 Jun 03:00', '7 Jun 11:00', '7 Jun 19:00', '10 Jun 03:00', '10 Jun 11:00'],
  prices: ['1.32850', '1.32510', '1.32180', '1.31840', '1.31500', '1.31160', '1.30820', '1.30490'], axisPad: 'pt-[20px] pb-[11px]', nowTop: 'top-[34%]',
  statusH: 'h-4', status: [['w-[116px]', 'Для справки, нажмите F1'], ['w-[84px]', 'Default'], ['w-[73px]', '2013.06.06 09:00'], ['w-[51px]', 'O: 1.31005'], ['w-[50px]', 'H: 1.31263'], ['w-[50px]', 'L: 1.30991'], ['w-[50px]', 'C: 1.31232'], ['w-[47px]', 'V: 3266']],
  tail: `<span class="ml-[4px] mr-[26px] flex">${icon('traffic', 'h-[9px] w-[17px]')}</span>566/0 kb`
}) + '<div class="h-[2px] flex-none bg-black"></div>' + win({
  mt5: 1, wide: 1, title: '20054165 - AlpariNZ-MT5 - Демо-счет - [EURUSD,H1]', titleH: 'h-5', titleBg: 'bg-linear-to-r from-[#2a2e32] via-[#0b0d10] to-[#08090b]', blobs: ['left-[600px] top-[3px] h-5 w-7 bg-[#cfe6ee]'],
  frame: '-mb-[2px] mr-[3px] flex-1 min-h-0', toolH: 'h-[23px]', bodyH: 'flex-1', panelW: 'w-[169px]', clock: 'Обзор рынка: 18:22:09', ticks: t5, ask: 3,
  x0: 727, top: 368, w: 426, h: 288, y0: 378, p0: 32980, per: 14.451, count: 147, lastX: 1149, pitch: 2.875, thin: 1,
  times: ['31 May 2013', '3 Jun 07:00', '3 Jun 23:00', '4 Jun 15:00', '5 Jun 07:00', '5 Jun 23:00', '6 Jun 15:00', '7 Jun 07:00', '7 Jun 23:00', '10 Jun 15:00'],
  prices: ['1.32980', '1.32645', '1.32310', '1.31975', '1.31640', '1.31305', '1.30970', '1.30635', '1.30300', '1.29965', '1.29630', '1.29295'], axisPad: 'pt-[6px] pb-[31px]', nowTop: 'top-[21%]',
  statusH: 'h-[16px]', status: [['w-[155px]', 'Для вызова справки нажмите F1'], ['w-[91px]', 'Default'], ['w-[70px]', ''], ['w-[50px]', ''], ['w-[50px]', ''], ['w-[50px]', ''], ['w-[50px]', ''], ['w-[47px]', '']],
  tail: `<span class="ml-[2px] mr-[3px] flex">${icon('server', 'size-[12px]')}</span>46.4 / 0.0 Mb`
});
</script>
</body>
</html>
